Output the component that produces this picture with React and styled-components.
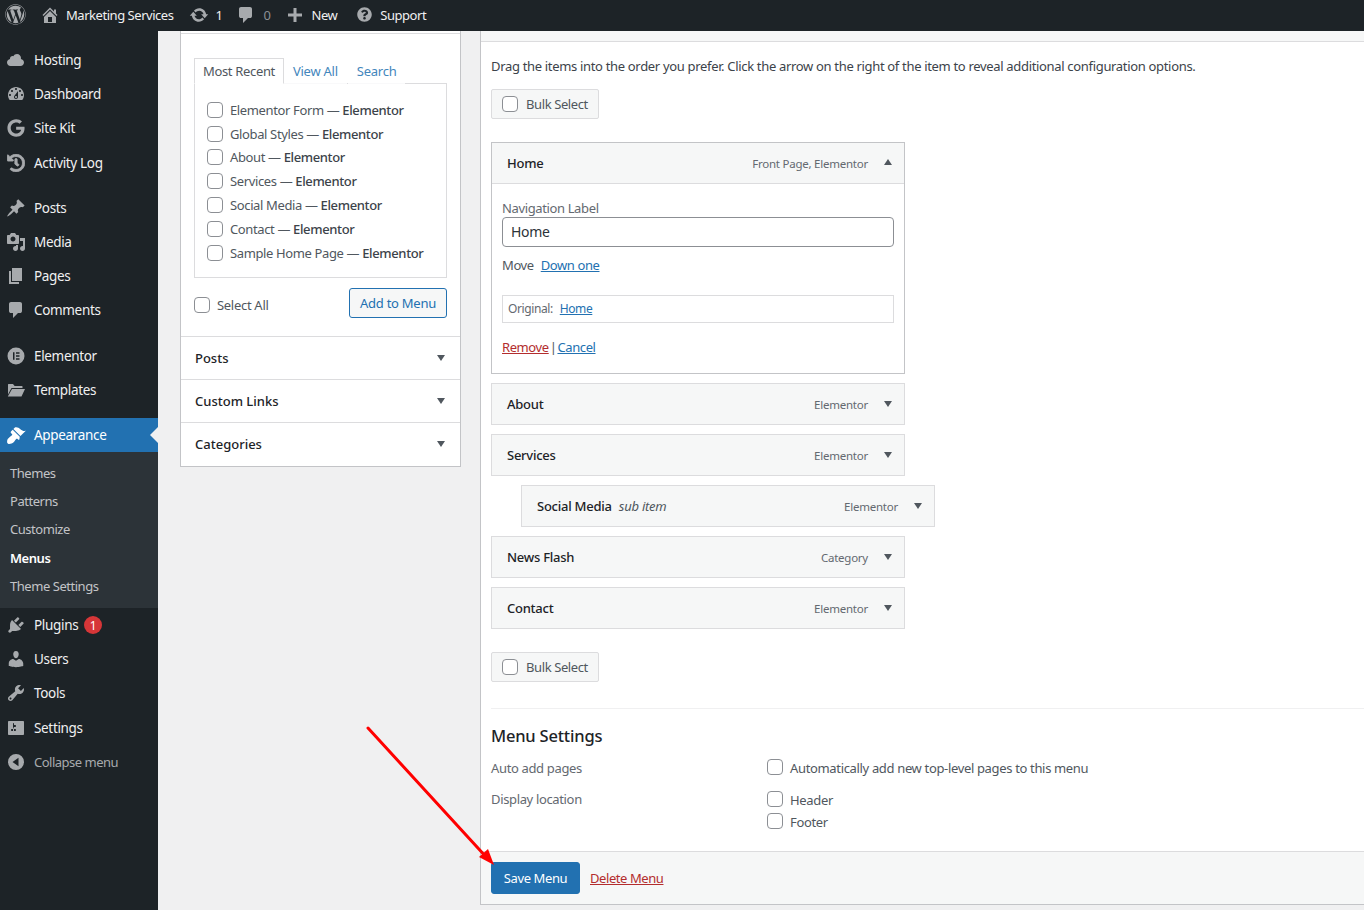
import React from 'react';
import styled, { createGlobalStyle } from 'styled-components';
import { FaWordpress, FaGoogle, FaHistory, FaQuestionCircle } from 'react-icons/fa';

const paths = {
    home: 'M16 8.5l1.53 1.53-1.06 1.06L10 4.62l-6.47 6.47-1.06-1.06L10 2.5l4 4v-2h2v4zm-6-2.46l6 5.99V18H4v-5.97zM12 17v-5H8v5h4z',
    update: 'M10.2 3.28c3.53 0 6.43 2.61 6.92 6h2.08l-3.5 4-3.5-4h2.32c-.45-1.97-2.21-3.45-4.32-3.45-1.45 0-2.73.71-3.54 1.78L4.95 5.66C6.23 4.2 8.11 3.28 10.2 3.28zm-.4 13.44c-3.52 0-6.43-2.61-6.92-6H.8l3.5-4c1.17 1.33 2.33 2.67 3.5 4H5.48c.45 1.97 2.21 3.45 4.32 3.45 1.45 0 2.73-.71 3.54-1.78l1.71 1.95c-1.28 1.46-3.15 2.38-5.25 2.38z',
    comment: 'M5 2h9q.82 0 1.41.59T16 4v7q0 .82-.59 1.41T14 13h-2l-5 5v-5H5q-.82 0-1.41-.59T3 11V4q0-.82.59-1.41T5 2z',
    plus: 'M8.5 3h3v5.5H17v3h-5.5V17h-3v-5.5H3v-3h5.5z',
    cloud: 'M14.9 9c1.8.2 3.1 1.7 3.1 3.5 0 1.9-1.6 3.5-3.5 3.5h-10C2.6 16 1 14.4 1 12.5 1 10.7 2.3 9.3 4.1 9 4 8.8 4 8.7 4 8.5 4 7.1 5.1 6 6.5 6c.3 0 .7.1.9.2C8.1 4.9 9.4 4 11 4c2.2 0 4 1.8 4 4 0 .4-.1.7-.1 1z',
    dashboard: 'M3.76 16h12.48c1.1-1.37 1.76-3.11 1.76-5 0-4.42-3.58-8-8-8s-8 3.58-8 8c0 1.89.66 3.63 1.76 5zM10 4c.55 0 1 .45 1 1s-.45 1-1 1-1-.45-1-1 .45-1 1-1zM6 6c.55 0 1 .45 1 1s-.45 1-1 1-1-.45-1-1 .45-1 1-1zm8 0c.55 0 1 .45 1 1s-.45 1-1 1-1-.45-1-1 .45-1 1-1zm-5.37 5.55L12 7v6c0 1.1-.9 2-2 2s-2-.9-2-2c0-.57.24-1.08.63-1.45zM4 10c.55 0 1 .45 1 1s-.45 1-1 1-1-.45-1-1 .45-1 1-1zm12 0c.55 0 1 .45 1 1s-.45 1-1 1-1-.45-1-1 .45-1 1-1zm-5 3c0-.55-.45-1-1-1s-1 .45-1 1 .45 1 1 1 1-.45 1-1z',
    pin: 'M10.44 3.02l1.82-1.82 6.36 6.35-1.83 1.82c-1.05-.68-2.48-.57-3.41.36l-.75.75c-.92.93-1.04 2.35-.35 3.41l-1.83 1.82-2.41-2.41-2.8 2.79c-.42.42-3.38 2.71-3.8 2.29s1.86-3.39 2.28-3.81l2.79-2.79L4.1 9.36l1.83-1.82c1.05.69 2.48.57 3.4-.36l.75-.75c.93-.92 1.05-2.35.36-3.41z',
    media: 'M13 11V4c0-.55-.45-1-1-1h-1.67L9 1H5L3.67 3H2c-.55 0-1 .45-1 1v7c0 .55.45 1 1 1h10c.55 0 1-.45 1-1zM7 4.5c1.38 0 2.5 1.12 2.5 2.5S8.38 9.5 7 9.5 4.5 8.38 4.5 7 5.62 4.5 7 4.5zM14 6h5v10.5c0 1.38-1.12 2.5-2.5 2.5S14 17.88 14 16.5s1.12-2.5 2.5-2.5c.17 0 .34.02.5.05V9h-3V6zm-4 8.05V13h2v3.5c0 1.38-1.12 2.5-2.5 2.5S7 17.88 7 16.5 8.12 14 9.5 14c.17 0 .34.02.5.05z',
    page: 'M6 15V2h10v13H6zm-1 1h8v2H3V5h2v11z',
    elementor: 'M10 1.500a8.500 8.500 0 1 0 0 17 8.500 8.500 0 0 0 0-17zM7 6.300h1.500v7.400H7zM10 6.300h3.500v1.500H10zM10 9.250h3.500v1.500H10zM10 12.200h3.500v1.500H10z',
    folder: 'M2 4.500c0-.3.2-.5.5-.5H7l1.600 2H16c.3 0 .5.2.5.5V8H5.500L2 14.500zM6 9h13l-3.500 7.500H1.800z',
    brush: 'M14.48 11.06L7.41 3.99l1.5-1.5c.5-.56 2.3-.47 3.51.32 1.21.8 1.43 1.28 2.91 2.1 1.18.64 2.45 1.26 4.45.85zm-.71.71L6.7 4.7 4.93 6.47c-.39.39-.39 1.02 0 1.41l1.06 1.06c.39.39.39 1.03 0 1.42-.6.6-1.43 1.11-2.21 1.69-.35.26-.7.53-1.01.84C1.43 13.71 1 15.5 1.1 17.300c.05.9.7 1.55 1.600 1.600 1.800.1 3.590-.33 4.950-1.680.31-.31.58-.66.84-1.010.58-.78 1.090-1.610 1.690-2.210.39-.39 1.030-.39 1.420 0l.400.400c.39.39 1.020.39 1.410 0z',
    plugin: 'M13.11 4.36L9.87 7.6 8 5.73l3.24-3.24c.35-.34 1.05-.2 1.56.32.52.51.66 1.21.31 1.55zm-8 1.77l.91-1.12 9.01 9.01-1.19.84c-.71.71-2.63 1.16-3.82 1.16H6.14L4.9 17.26c-.59.59-1.54.59-2.12 0-.59-.58-.59-1.53 0-2.12l1.24-1.24v-3.88c0-1.13.4-3.19 1.09-3.89zm7.26 3.97l3.24-3.24c.34-.35 1.04-.21 1.55.31.52.51.66 1.21.31 1.55l-3.24 3.25z',
    users: 'M10 9.25c-2.27 0-2.73-3.44-2.73-3.44C7 4.02 7.82 2 9.97 2c2.16 0 2.98 2.02 2.71 3.81 0 0-.41 3.44-2.68 3.44zm0 2.57L12.72 10c2.39 0 4.52 2.33 4.52 4.53v2.49s-3.65 1.13-7.24 1.13c-3.65 0-7.24-1.13-7.24-1.13v-2.49c0-2.25 1.94-4.48 4.47-4.48z',
    tools: 'M16.68 9.77c-1.34 1.34-3.3 1.67-4.95.99l-5.41 6.52c-.99.99-2.59.99-3.58 0s-.99-2.59 0-3.57l6.52-5.42c-.68-1.65-.35-3.61.99-4.95 1.28-1.28 3.12-1.62 4.72-1.06l-2.89 2.89 2.82 2.82 2.86-2.87c.53 1.58.18 3.39-1.08 4.65zM3.81 16.21c.4.39 1.04.39 1.43 0 .4-.4.4-1.04 0-1.43-.39-.4-1.03-.4-1.43 0-.39.39-.39 1.03 0 1.43z',
    settings: 'M18 16V4c0-.55-.45-1-1-1H3c-.55 0-1 .45-1 1v12c0 .55.45 1 1 1h14c.55 0 1-.45 1-1zM8 11h1c.55 0 1 .45 1 1s-.45 1-1 1H8v1.5c0 .28-.22.5-.5.5s-.5-.22-.5-.5V13H6c-.55 0-1-.45-1-1s.45-1 1-1h1V5.5c0-.28.22-.5.5-.5s.5.22.5.5V7h1c.55 0 1 .45 1 1s-.45 1-1 1h-1v5.5c0 .28-.22.5-.5.5s-.5-.22-.5-.5V9z',
    collapse: 'M10 2a8 8 0 1 0 0 16 8 8 0 0 0 0-16zm2.500 3.800v8.400L6.500 10z',
};

const Dash = ({ name, size = 20 }) => (
    <svg width={size} height={size} viewBox="0 0 20 20" fill="currentColor" fillRule="evenodd">
        <path d={paths[name]} />
    </svg>
);

const GlobalStyle = createGlobalStyle`
    html, body {
        margin: 0;
        height: 910px;
        overflow: hidden;
        background: #f0f0f1;
        font-family: "Noto Sans", "Open Sans", sans-serif;
        font-size: 13px;
        color: #3c434a;
    }
    * {
        box-sizing: border-box;
    }
`;

const Page = styled.div`
    position: relative;
    width: 1364px;
    height: 910px;
    overflow: hidden;
`;

const TopBar = styled.header`
    display: flex;
    align-items: center;
    height: 31px;
    background: #1d2327;
    color: #f0f0f1;
    letter-spacing: -0.46px;
`;

const BarItem = styled.div`
    display: flex;
    align-items: center;
    gap: ${(p) => p.$gap || 6}px;
    margin-left: ${(p) => p.$left || 0}px;
    padding-bottom: 2px;
    color: ${(p) => (p.$muted ? '#8c8f94' : '#f0f0f1')};
    white-space: nowrap;
    svg {
        color: #a7aaad;
        flex: none;
    }
`;

const Body = styled.div`
    display: flex;
    height: 879px;
`;

const Sidebar = styled.nav`
    flex: none;
    width: 158px;
    padding-top: 12px;
    background: #1d2327;
`;

const MenuGroup = styled.div`
    margin-bottom: ${(p) => p.$after || 0}px;
`;

const MenuItem = styled.div`
    position: relative;
    display: flex;
    align-items: center;
    gap: 8px;
    height: ${(p) => p.$h || 34}px;
    padding-left: 6px;
    font-size: ${(p) => (p.$dim ? 13 : 13.5)}px;
    letter-spacing: ${(p) => (p.$dim ? -0.5 : -0.33)}px;
    color: ${(p) => (p.$active ? '#fff' : p.$dim ? '#a7aaad' : '#f0f0f1')};
    background: ${(p) => (p.$active ? '#2271b1' : 'transparent')};
    svg {
        flex: none;
        color: ${(p) => (p.$active ? '#fff' : '#a7aaad')};
    }
    ${(p) => p.$active && `
        &::after {
            content: "";
            position: absolute;
            right: 0;
            top: 9px;
            border: 8px solid transparent;
            border-right-color: #f0f0f1;
            border-left: 0;
        }
    `}
`;

const SubMenu = styled.div`
    height: 156px;
    padding-top: 6.5px;
    background: #2c3338;
`;

const SubItem = styled.div`
    display: flex;
    align-items: center;
    height: 28.4px;
    padding-left: 10px;
    letter-spacing: -0.46px;
    color: ${(p) => (p.$current ? '#fff' : '#c3c4c7')};
    font-weight: ${(p) => (p.$current ? 600 : 400)};
`;

const Badge = styled.span`
    display: inline-flex;
    align-items: center;
    justify-content: center;
    width: 18px;
    height: 18px;
    margin-left: -2px;
    border-radius: 50%;
    background: #d63638;
    color: #fff;
    font-size: 12px;
    letter-spacing: 0;
`;

const Content = styled.main`
    flex: 1;
    display: flex;
    align-items: flex-start;
    min-width: 0;
    padding-left: 22px;
`;

const LeftPanel = styled.section`
    flex: none;
    width: 281px;
    margin-right: 19px;
    padding-bottom: 1px;
    background: #fff;
    border: 1px solid #c3c4c7;
    border-top: 0;
`;

const TabsArea = styled.div`
    padding: 24px 13px 18px;
    border-top: 1px solid #dcdcde;
    margin-top: 2px;
`;

const Tabs = styled.div`
    display: flex;
    align-items: flex-end;
    height: 26px;
    margin-bottom: -1px;
`;

const Tab = styled.div`
    position: relative;
    display: flex;
    align-items: center;
    height: 26px;
    padding: 0 ${(p) => (p.$active ? 8 : 9)}px 1px;
    margin-right: ${(p) => (p.$active ? 0 : 1)}px;
    color: ${(p) => (p.$active ? '#50575e' : '#2271b1')};
    opacity: ${(p) => (p.$active ? 1 : 0.85)};
    letter-spacing: ${(p) => (p.$active ? -0.34 : -0.25)}px;
    background: #fff;
    ${(p) => p.$active && `
        border: 1px solid #dcdcde;
        border-bottom-color: #fff;
        z-index: 1;
    `}
`;

const TabPanel = styled.div`
    display: flex;
    flex-direction: column;
    height: 195px;
    padding: 14px 12px 0;
    border: 1px solid #dcdcde;
`;

const Check = styled.span`
    flex: none;
    display: inline-block;
    width: 16px;
    height: 16px;
    background: #fff;
    border: 1px solid #8c8f94;
    border-radius: 4px;
`;

const CheckRow = styled.label`
    display: flex;
    align-items: center;
    gap: 7px;
    height: 23.8px;
    color: #50575e;
    letter-spacing: -0.37px;
    white-space: nowrap;
    b {
        font-weight: 500;
        color: #3c434a;
    }
`;

const PanelActions = styled.div`
    display: flex;
    align-items: center;
    justify-content: space-between;
    margin-top: 10px;
    height: 30px;
`;

const SelectAll = styled(CheckRow)`
    margin-top: 4px;
    letter-spacing: -0.3px;
`;

const OutlineButton = styled.button`
    width: 98px;
    height: 30px;
    padding: 0;
    font: inherit;
    letter-spacing: -0.25px;
    color: #2271b1;
    background: #f6f7f7;
    border: 1px solid #2271b1;
    border-radius: 3px;
`;

const Accordion = styled.div`
    display: flex;
    align-items: center;
    justify-content: space-between;
    height: 43px;
    padding: 0 15px 0 14px;
    border-top: 1px solid #dcdcde;
    font-weight: 500;
    font-size: 13px;
    color: #1d2327;
`;

const ArrowDown = styled.span`
    width: 0;
    height: 0;
    border-style: solid;
    border-width: 6px 4.5px 0;
    border-color: #50575e transparent transparent;
`;

const ArrowUp = styled(ArrowDown)`
    border-width: 0 4.5px 6px;
    border-color: transparent transparent #50575e;
    margin-top: -3px;
`;

const RightPanel = styled.section`
    flex: none;
    width: 900px;
    height: 874px;
    background: #fff;
    border: 1px solid #c3c4c7;
    border-top: 0;
    border-right: 0;
    display: flex;
    flex-direction: column;
`;

const PanelHead = styled.div`
    height: 11px;
    background: #f6f7f7;
    border-bottom: 1px solid #dcdcde;
`;

const PanelBody = styled.div`
    flex: 1;
    padding: 14px 0 0 10px;
`;

const Hint = styled.p`
    margin: 0 0 13px;
    height: 20px;
    line-height: 20px;
    color: #3c434a;
    letter-spacing: -0.325px;
    white-space: nowrap;
`;

const BulkBox = styled.div`
    display: flex;
    align-items: center;
    gap: 8px;
    width: 108px;
    height: 30px;
    padding-left: 10px;
    background: #f6f7f7;
    border: 1px solid #dcdcde;
    border-radius: 2px;
    color: #50575e;
    letter-spacing: -0.4px;
    white-space: nowrap;
`;

const ItemList = styled.div`
    display: flex;
    flex-direction: column;
    gap: 9px;
    margin: 23px 0 23px;
`;

const MenuCard = styled.div`
    width: 414px;
    margin-left: ${(p) => p.$indent || 0}px;
    border: 1px solid #dcdcde;
    background: #f6f7f7;
`;

const CardHead = styled.div`
    display: flex;
    align-items: center;
    height: ${(p) => (p.$open ? 41 : 40)}px;
    padding: 0 12px 0 15px;
    border-bottom: ${(p) => (p.$open ? '1px solid #dcdcde' : '0')};
    letter-spacing: -0.25px;
`;

const CardTitle = styled.span`
    flex: 1;
    font-weight: 500;
    color: #1d2327;
    em {
        font-weight: 400;
        font-style: italic;
        color: #50575e;
        margin-left: 4px;
    }
`;

const CardType = styled.span`
    font-size: 11.5px;
    letter-spacing: -0.24px;
    color: #646970;
    margin-right: 16px;
`;

const OpenCard = styled(MenuCard)`
    border-color: #c3c4c7;
    background: #fff;
    ${CardHead} {
        background: #f6f7f7;
    }
`;

const CardFields = styled.div`
    padding: 16px 10px 0;
    height: 189px;
    color: #50575e;
`;

const FieldLabel = styled.div`
    height: 17px;
    line-height: 17px;
    letter-spacing: -0.37px;
    color: #646970;
`;

const TextField = styled.input`
    display: block;
    width: 100%;
    height: 30px;
    padding: 0 8px 1px;
    font: inherit;
    font-size: 14px;
    letter-spacing: -0.3px;
    color: #2c3338;
    background: #fff;
    border: 1px solid #8c8f94;
    border-radius: 4px;
    outline: none;
`;

const MoveRow = styled.div`
    display: flex;
    gap: 7px;
    margin-top: 8px;
    height: 20px;
    line-height: 20px;
    letter-spacing: -0.4px;
`;

const Link = styled.a`
    color: ${(p) => (p.$danger ? '#b32d2e' : '#2271b1')};
    text-decoration: underline;
`;

const DeleteLink = styled(Link)`
    letter-spacing: -0.42px;
`;

const OriginalBox = styled.div`
    display: flex;
    align-items: center;
    gap: 7px;
    height: 28px;
    margin-top: 20px;
    padding: 0 0 1px 5px;
    border: 1px solid #dcdcde;
    font-size: 12px;
    letter-spacing: -0.4px;
    color: #646970;
`;

const CardLinks = styled.div`
    margin-top: 14px;
    height: 20px;
    line-height: 20px;
    letter-spacing: -0.4px;
    word-spacing: -2px;
    color: #50575e;
`;

const Divider = styled.hr`
    margin: 26px 0 0;
    border: 0;
    border-top: 1px solid #f0f0f1;
`;

const SettingsTitle = styled.h3`
    margin: 15px 0 8px;
    height: 24px;
    line-height: 24px;
    font-size: 16.5px;
    font-weight: 500;
    letter-spacing: -0.2px;
    color: #1d2327;
`;

const SettingRow = styled.div`
    display: grid;
    grid-template-columns: 276px 1fr;
    margin-bottom: ${(p) => p.$after || 0}px;
`;

const SettingName = styled.div`
    height: 24px;
    line-height: 24px;
    letter-spacing: -0.35px;
    color: #646970;
`;

const SettingField = styled.div`
    display: flex;
    flex-direction: column;
    padding-top: 1px;
`;

const OptionRow = styled(CheckRow)`
    height: 22px;
    padding-top: 2px;
    letter-spacing: -0.34px;
    ${Check} {
        margin-top: -2px;
    }
`;

const PanelFooter = styled.div`
    display: flex;
    align-items: center;
    gap: 10px;
    height: 53px;
    padding-left: 10px;
    background: #f6f7f7;
    border-top: 1px solid #dcdcde;
`;

const PrimaryButton = styled.button`
    width: 89px;
    height: 32px;
    padding: 0;
    font: inherit;
    letter-spacing: -0.4px;
    color: #fff;
    background: #2271b1;
    border: 1px solid #2271b1;
    border-radius: 3px;
`;

const Pointer = styled.svg`
    position: absolute;
    left: 360px;
    top: 720px;
`;

const sidebarGroups = [
    { after: 11, items: [['cloud', 'Hosting'], ['dashboard', 'Dashboard'], ['google', 'Site Kit'], ['history', 'Activity Log', 35]] },
    { after: 12, items: [['pin', 'Posts'], ['media', 'Media'], ['page', 'Pages'], ['comment', 'Comments']] },
    { after: 11, items: [['elementor', 'Elementor'], ['folder', 'Templates']] },
];
const subItems = ['Themes', 'Patterns', 'Customize', 'Menus', 'Theme Settings'];
const recentPages = ['Elementor Form', 'Global Styles', 'About', 'Services', 'Social Media', 'Contact', 'Sample Home Page'];
const closedCards = [
    { title: 'About', type: 'Elementor' },
    { title: 'Services', type: 'Elementor' },
    { title: 'Social Media', sub: true, type: 'Elementor' },
    { title: 'News Flash', type: 'Category' },
    { title: 'Contact', type: 'Elementor' },
];

function MenuIcon({ name }) {
    if (name === 'google') return <FaGoogle size={18} style={{ margin: '0 1px' }} />;
    if (name === 'history') return <FaHistory size={18} strokeWidth={24} style={{ margin: '0 1px' }} />;
    return <Dash name={name} />;
}

function App() {
    return (
        <Page>
            <GlobalStyle />
            <TopBar>
                <BarItem $left={5}><FaWordpress size={21} /></BarItem>
                <BarItem $left={14}><Dash name="home" />Marketing Services</BarItem>
                <BarItem $left={15} $gap={7}><Dash name="update" />1</BarItem>
                <BarItem $left={14} $gap={7} $muted><Dash name="comment" />0</BarItem>
                <BarItem $left={15}><Dash name="plus" />New</BarItem>
                <BarItem $left={20} $gap={8}><FaQuestionCircle size={15} />Support</BarItem>
            </TopBar>
            <Body>
                <Sidebar>
                    {sidebarGroups.map((group) => (
                        <MenuGroup key={group.items[0][1]} $after={group.after}>
                            {group.items.map(([icon, label, h]) => (
                                <MenuItem key={label} $h={h}><MenuIcon name={icon} />{label}</MenuItem>
                            ))}
                        </MenuGroup>
                    ))}
                    <MenuItem $active><Dash name="brush" />Appearance</MenuItem>
                    <SubMenu>
                        {subItems.map((item) => (
                            <SubItem key={item} $current={item === 'Menus'}>{item}</SubItem>
                        ))}
                    </SubMenu>
                    <MenuItem><Dash name="plugin" />Plugins<Badge>1</Badge></MenuItem>
                    <MenuItem><Dash name="users" />Users</MenuItem>
                    <MenuItem><Dash name="tools" />Tools</MenuItem>
                    <MenuItem $h={35}><Dash name="settings" />Settings</MenuItem>
                    <MenuItem $dim><Dash name="collapse" />Collapse menu</MenuItem>
                </Sidebar>
                <Content>
                    <LeftPanel>
                        <TabsArea>
                            <Tabs>
                                <Tab $active>Most Recent</Tab>
                                <Tab>View All</Tab>
                                <Tab>Search</Tab>
                            </Tabs>
                            <TabPanel>
                                {recentPages.map((name) => (
                                    <CheckRow key={name}><Check /><span>{name} — <b>Elementor</b></span></CheckRow>
                                ))}
                            </TabPanel>
                            <PanelActions>
                                <SelectAll><Check />Select All</SelectAll>
                                <OutlineButton>Add to Menu</OutlineButton>
                            </PanelActions>
                        </TabsArea>
                        {['Posts', 'Custom Links', 'Categories'].map((name) => (
                            <Accordion key={name}>{name}<ArrowDown /></Accordion>
                        ))}
                    </LeftPanel>
                    <RightPanel>
                        <PanelHead />
                        <PanelBody>
                            <Hint>Drag the items into the order you prefer. Click the arrow on the right of the item to reveal additional configuration options.</Hint>
                            <BulkBox><Check />Bulk Select</BulkBox>
                            <ItemList>
                                <OpenCard>
                                    <CardHead $open>
                                        <CardTitle>Home</CardTitle>
                                        <CardType>Front Page, Elementor</CardType>
                                        <ArrowUp />
                                    </CardHead>
                                    <CardFields>
                                        <FieldLabel>Navigation Label</FieldLabel>
                                        <TextField readOnly value="Home" />
                                        <MoveRow>Move <Link>Down one</Link></MoveRow>
                                        <OriginalBox>Original: <Link>Home</Link></OriginalBox>
                                        <CardLinks><Link $danger>Remove</Link> | <Link>Cancel</Link></CardLinks>
                                    </CardFields>
                                </OpenCard>
                                {closedCards.map((card) => (
                                    <MenuCard key={card.title} $indent={card.sub ? 30 : 0}>
                                        <CardHead>
                                            <CardTitle>{card.title}{card.sub && <em> sub item</em>}</CardTitle>
                                            <CardType>{card.type}</CardType>
                                            <ArrowDown />
                                        </CardHead>
                                    </MenuCard>
                                ))}
                            </ItemList>
                            <BulkBox><Check />Bulk Select</BulkBox>
                            <Divider />
                            <SettingsTitle>Menu Settings</SettingsTitle>
                            <SettingRow $after={7}>
                                <SettingName>Auto add pages</SettingName>
                                <OptionRow><Check />Automatically add new top-level pages to this menu</OptionRow>
                            </SettingRow>
                            <SettingRow>
                                <SettingName>Display location</SettingName>
                                <SettingField>
                                    <OptionRow><Check />Header</OptionRow>
                                    <OptionRow><Check />Footer</OptionRow>
                                </SettingField>
                            </SettingRow>
                        </PanelBody>
                        <PanelFooter>
                            <PrimaryButton>Save Menu</PrimaryButton>
                            <DeleteLink $danger>Delete Menu</DeleteLink>
                        </PanelFooter>
                    </RightPanel>
                </Content>
            </Body>
            <Pointer width="145" height="155" viewBox="0 0 145 155">
                <line x1="8" y1="8" x2="128" y2="139" stroke="#f00" strokeWidth="3" strokeLinecap="round" />
                <polygon points="134,145 119,137 128,129" fill="#f00" />
            </Pointer>
        </Page>
    );
}

export default App;
